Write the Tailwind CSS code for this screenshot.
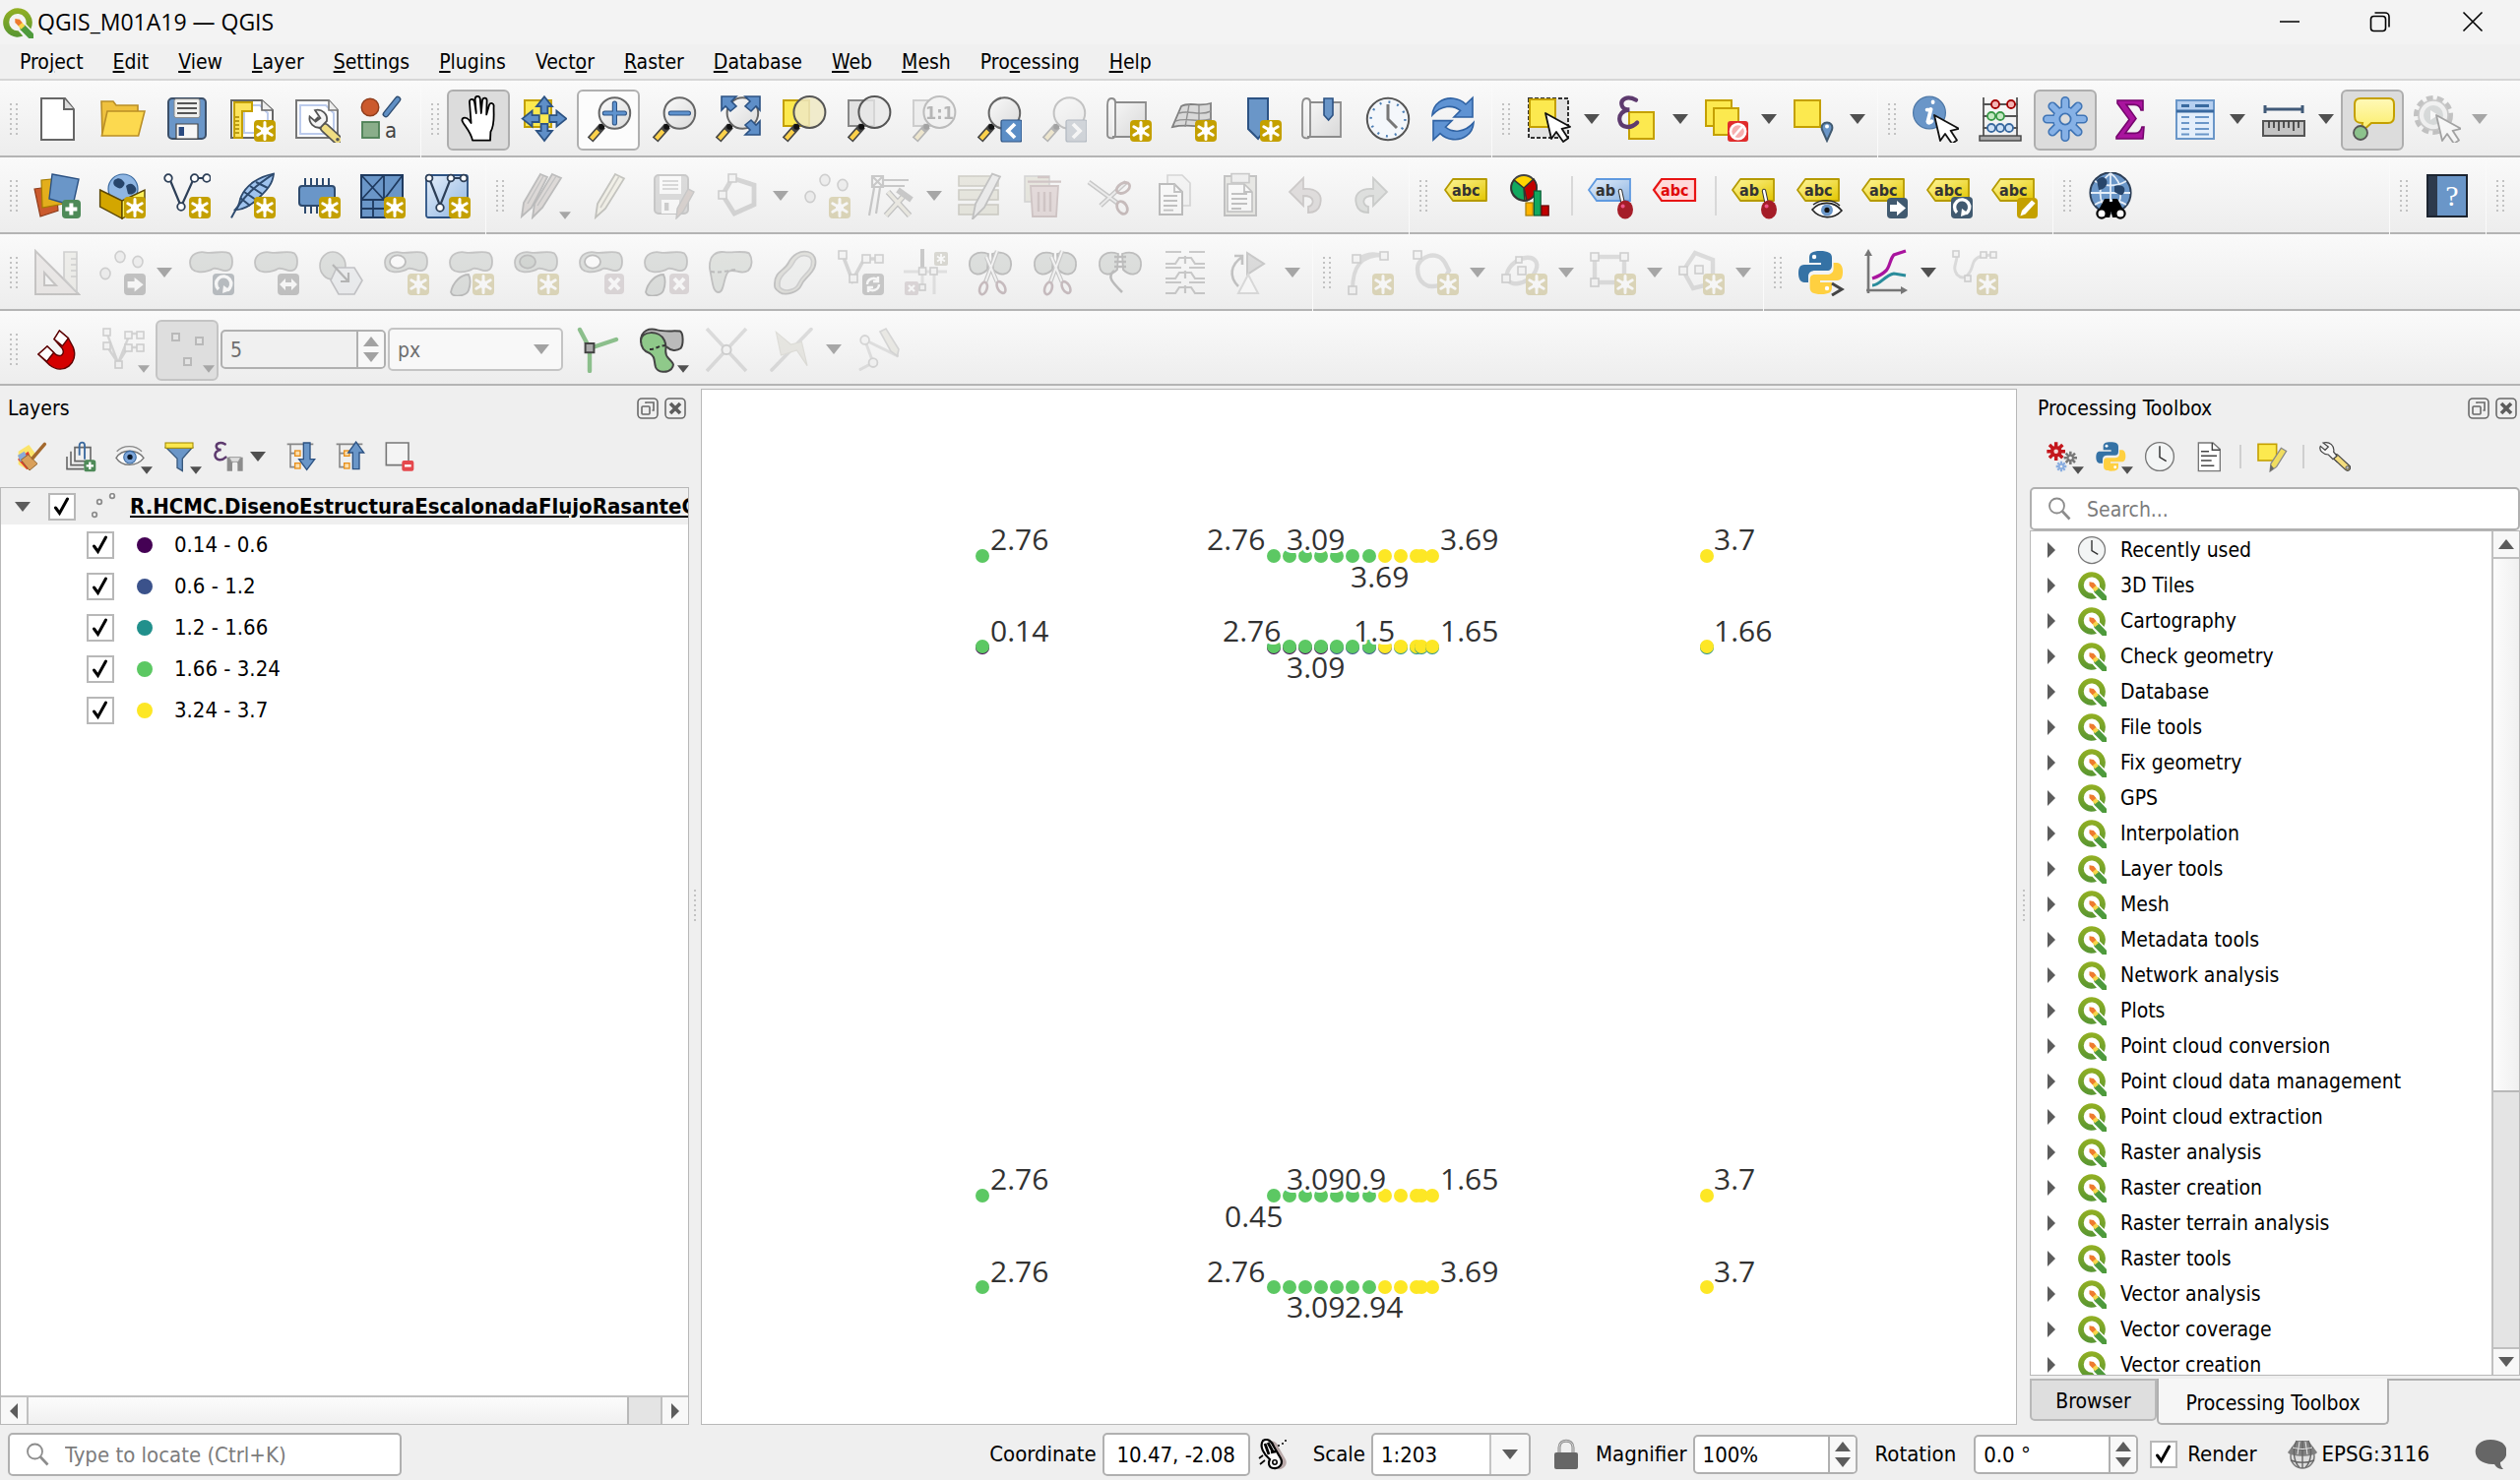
<!DOCTYPE html>
<html lang="en">
<head>
<meta charset="utf-8">
<title>QGIS_M01A19 — QGIS</title>
<script src="https://cdn.jsdelivr.net/npm/@tailwindcss/browser@4"></script>
</head>
<body class="flex h-screen flex-col overflow-hidden bg-[#efefef] font-['DejaVu_Sans_Condensed','DejaVu_Sans',sans-serif] text-[21px] leading-7 text-black">

<svg class="absolute size-0" aria-hidden="true">
  <defs>
    <linearGradient id="ql" x1="0" y1="0" x2="0" y2="1"><stop offset="0" stop-color="#93b023"/><stop offset="1" stop-color="#589632"/></linearGradient>
    <linearGradient id="gl" x1="0" y1="0" x2="1" y2="1"><stop offset="0" stop-color="#fafafa"/><stop offset="1" stop-color="#d8d8d8"/></linearGradient>
    <linearGradient id="bl" x1="0" y1="0" x2="1" y2="1"><stop offset="0" stop-color="#e6effa"/><stop offset="1" stop-color="#8db4e2"/></linearGradient>
    <linearGradient id="yl" x1="0" y1="0" x2="1" y2="1"><stop offset="0" stop-color="#fff79a"/><stop offset="1" stop-color="#e3c600"/></linearGradient>
    <linearGradient id="tipf" x1="0" y1="0" x2="0" y2="1"><stop offset="0" stop-color="#fff9b8"/><stop offset="1" stop-color="#fbec62"/></linearGradient>
    <g id="star"><rect x="13" y="12.500" width="11" height="11" rx="2" fill="#c4a000"/><path d="M18.500 13.800v8.400M14.900 15.900l7.200 4.200M14.900 20.100l7.200-4.200" stroke="#fff" stroke-width="1.500" stroke-linecap="round"/><circle cx="18.500" cy="18" r="2" fill="#fff"/></g>
    <g id="cursor"><path d="M9 9l3 13 2.500-3.500 3.500 5 2.500-1.800-3.200-4.800 4.200-1z" fill="#fff" stroke="#111" stroke-width=".9" stroke-linejoin="round"/></g>
    <g id="magh"><path d="M9 15.500L2.800 22.500" stroke="#444" stroke-width="3.800"/><path d="M6.800 18L3.300 22" stroke="#fcd14a" stroke-width="2.100"/><circle cx="8.600" cy="15.900" r="1.500" fill="#111"/></g>
    <g id="mag"><use href="#magh"/><circle cx="15.200" cy="9" r="7.900" fill="url(#gl)" fill-opacity=".9" stroke="#666" stroke-width="1"/></g>
    <g id="wr"><path d="M10 11l8 8" stroke="#555" stroke-width="4"/><path d="M15 15.500l6.500 6" stroke="#555" stroke-width="5" stroke-linecap="round"/><path d="M15 15.500l6.500 6" stroke="#f0dd82" stroke-width="3.300" stroke-linecap="round"/><path d="M10 6.500a4.800 4.800 0 0 1 6 5.500l-3.200 3.300a4.800 4.800 0 0 1-5.500-5.600l3 2.600 2.400-1.800z" fill="#f4f4f4" stroke="#555" stroke-width=".9"/><circle cx="21.500" cy="21.400" r=".9" fill="#555"/></g>
    <g id="penc"><path d="M15.500 1l4.500 2.200-9.500 15.300-5 4.500 1-7z" fill="#efe7b8" stroke="#6b6b50" stroke-width=".9"/><path d="M17.500 2L8 18" stroke="#8a8560" stroke-width=".8"/></g>
    <g id="blob"><path d="M1.500 7C1.500 2.500 6 1 9.500 1.800S18 .5 21.500 2.200C23.500 4 23.500 9 21.500 10.500c-3 2-4.500-1-8-.6C10 12 1.500 13.500 1.500 7z" fill="#a9b6ab" stroke="#666" stroke-width=".9"/></g>
    <g id="tagy"><path d="M1 9l4-5.500h17v11H5z" fill="url(#yl)" stroke="#b59a00" stroke-width=".9" stroke-linejoin="round"/></g>
    <g id="pin"><path d="M17 9.500l1.500 7" stroke="#333" stroke-width="2.200" stroke-linecap="round"/><path d="M17 9.500l1.500 7" stroke="#fff" stroke-width="1.200" stroke-linecap="round"/><ellipse cx="19.500" cy="19" rx="4" ry="4.700" fill="#a51d28"/><circle cx="18.300" cy="17.300" r="1" fill="#e58"/></g>
    <g id="paper"><path d="M3.500 1.500C1.500 1.500 1.500 4 1.500 5v15c0 2 4 2.500 4 0V3.500h15.500V21H4" fill="url(#gl)" stroke="#8c8c8c" stroke-width=".9"/><path d="M3.500 1.500c2 0 2 1.500 2 2" fill="none" stroke="#8c8c8c"/></g>
    <g id="pt" fill="#ddd" stroke="#888" stroke-width=".8"><ellipse cx="11" cy="4" rx="2.500" ry="2.800"/><ellipse cx="20" cy="6.500" rx="2.500" ry="2.800"/><ellipse cx="3.500" cy="12.500" rx="2.500" ry="2.800"/></g>
    <path id="eps" d="M10 2.500C6 .5 2.500 2 3.500 5c.4 1.300 2 1.800 3.500 1.800C4 7 1.800 9 2.500 11.800c.8 3 5 3.600 8 .7" fill="none" stroke="#5d3a6e" stroke-width="1.900" stroke-linecap="round"/>
    <g id="rot"><rect x="13" y="12.500" width="11" height="11" rx="2" fill="#415a70"/><path d="M16 20.500a3.800 3.800 0 1 1 4.500.5" fill="none" stroke="#fff" stroke-width="1.700"/><path d="M18 22.500l.5-4 3.500 2.500z" fill="#fff"/></g>

    <symbol id="i-q" viewBox="0 0 24 24"><path fill-rule="evenodd" d="M12 1a11 11 0 1 0 4 21.200l-3.600-4A6.500 6.500 0 1 1 18.300 13l3.700 3.800A11 11 0 0 0 12 1z" fill="url(#ql)"/><path d="M13 13.500l4.500.3 6.500 6.700V24h-3.500L14 17.500z" fill="#4e9a3c"/><path d="M11.500 10.500l4 1.500 2 2.500-3 2.500-2.500-3z" fill="#f6d64a"/><path d="M10 9l3.500.5 2 2.500-3 2.500L10 12z" fill="#ee7b2f"/></symbol>
    <symbol id="i-new" viewBox="0 0 24 24"><path d="M4 1.500h12l4.500 5.500v15.500H4z" fill="#fff" stroke="#666"/><path d="M15.500 1.500V7h5" fill="#ddd" stroke="#666"/></symbol>
    <symbol id="i-open" viewBox="0 0 24 24"><path d="M1.500 3h6l1.500 2H20v3.500H6L2 20.500z" fill="#efc13e" stroke="#b98e26" stroke-width=".8"/><path d="M4.500 8H23.500l-3.200 12.500H1.700z" fill="#fcd94f" stroke="#b98e26" stroke-width=".8"/></symbol>
    <symbol id="i-save" viewBox="0 0 24 24"><rect x="2.500" y="1.500" width="19" height="20.500" rx="2" fill="#6a96c8" stroke="#3b4f68"/><rect x="5.500" y="1.800" width="13" height="9.500" rx="1" fill="#f0f0ee" stroke="#888" stroke-width=".5"/><path d="M7 4h10M7 6.500h10M7 9h10" stroke="#555" stroke-width=".9"/><path d="M6.500 22v-7.500h11V22z" fill="#f6f6f6" stroke="#444" stroke-width=".6"/><rect x="7.800" y="16" width="2.700" height="4.500" fill="#2a4a80"/></symbol>
    <symbol id="i-layout" viewBox="0 0 24 24"><path d="M1.500 2.500H17l5.500 5V21.500h-21z" fill="#fff" stroke="#666"/><path d="M8 5h8l4 4v10H8z" fill="none" stroke="#bccbec"/><path d="M17 2.500v5h5.500" fill="#eee" stroke="#666" stroke-width=".8"/><path d="M3 3.500h9v4.500H7v13.500H3z" fill="#fce35c" stroke="#c4a000"/><path d="M3.500 11h2M3.500 13h2M3.500 15h2M3.500 17h2M3.500 19h2" stroke="#a58600" stroke-width=".7"/><use href="#star"/></symbol>
    <symbol id="i-layman" viewBox="0 0 24 24"><path d="M1.500 2.500H18l4.500 5V21.500h-21z" fill="#fff" stroke="#777"/><path d="M3.500 5h13l4 4v10.500h-17z" fill="none" stroke="#bccbec"/><path d="M18 2.500v5h4.500" fill="#eee" stroke="#777" stroke-width=".8"/><use href="#wr" x="1" y="1"/></symbol>
    <symbol id="i-style" viewBox="0 0 24 24"><circle cx="6" cy="6" r="4.400" fill="#cb5a2d" stroke="#8f3d1c" stroke-width=".7"/><path d="M14 9.500l6-7.500" stroke="#2c4a6e" stroke-width="3.300" stroke-linecap="round"/><path d="M14 9.500l6-7.500" stroke="#5f8fc4" stroke-width="2" stroke-linecap="round"/><rect x="2" y="13.500" width="8.500" height="8" fill="#8aae8a" stroke="#4d8055" stroke-width=".9"/><text x="13.500" y="21.500" font-size="11" fill="#444">a</text></symbol>
    <symbol id="i-pan" viewBox="0 0 24 24"><path d="M9 22.800C8 18 4 14.500 3.700 12.700c0-1.800 2.300-1.700 3.600-.2l1 1.500L7.500 3.500C7.300 1.500 9.500 1.300 10 3.300l.9 5.700-.6-7C10.300 0 12.700-.2 12.900 1.800l.5 7.200L14 2.500c.3-1.600 2.400-1.500 2.300.2l-.2 7L17.500 4.800c.7-1.400 2.500-.9 2.300.7-.2 4 .8 9-1.600 13L18 22.800z" fill="#fff" stroke="#000" stroke-width=".9" stroke-linejoin="round"/></symbol>
    <symbol id="i-pansel" viewBox="0 0 24 24"><rect x="2.500" y="2.500" width="13.500" height="13.500" fill="#fce94f" stroke="#c4a000"/><g fill="#5f8fc8" stroke="#2c5283" stroke-width=".9"><path id="arw" d="M12.500.6l4 5h-2.300v3.600h-3.400V5.600H8.500z"/><use href="#arw" transform="rotate(90 12.500 11.800)"/><use href="#arw" transform="rotate(180 12.500 11.800)"/><use href="#arw" transform="rotate(270 12.500 11.800)"/></g></symbol>
    <symbol id="i-zin" viewBox="0 0 24 24"><use href="#mag"/><path d="M15.200 4v10M10.200 9h10" stroke="#2c5283" stroke-width="2.600" stroke-linecap="round"/><path d="M15.200 4v10M10.200 9h10" stroke="#5f93cf" stroke-width="1.600" stroke-linecap="round"/></symbol>
    <symbol id="i-zout" viewBox="0 0 24 24"><use href="#mag"/><path d="M10.700 9h9" stroke="#2c5283" stroke-width="2.600" stroke-linecap="round"/><path d="M10.700 9h9" stroke="#5f93cf" stroke-width="1.600" stroke-linecap="round"/></symbol>
    <symbol id="i-zfull" viewBox="0 0 24 24"><use href="#mag" x="-1" y="0"/><g fill="#5f8fc8" stroke="#2c5283" stroke-width=".8"><path id="ca" d="M3.500.5h7.500L8.500 3 11 5.500 8 8 5.500 5.500 3.500 7.500z"/><use href="#ca" transform="matrix(-1 0 0 1 26.500 0)"/><use href="#ca" transform="matrix(-1 0 0 -1 26.500 20.500)"/></g></symbol>
    <symbol id="i-zsel" viewBox="0 0 24 24"><rect x="2" y="2.500" width="13" height="13" fill="#fce94f" stroke="#c4a000"/><use href="#magh"/><circle cx="15.200" cy="8.500" r="8" fill="#efe9c4" fill-opacity=".85" stroke="#555"/></symbol>
    <symbol id="i-zlay" viewBox="0 0 24 24"><rect x="2" y="2.500" width="13" height="13" fill="#e2e2e2" stroke="#888"/><use href="#magh"/><circle cx="15.200" cy="8.500" r="8" fill="#e9e9e9" fill-opacity=".8" stroke="#555"/></symbol>
    <symbol id="i-z11" viewBox="0 0 24 24"><rect x="2" y="2.500" width="13" height="13" fill="#e2e2e2" stroke="#888"/><use href="#magh"/><circle cx="15.200" cy="8.500" r="8" fill="#eee" stroke="#555"/><text x="15.200" y="12" font-size="9" font-weight="bold" text-anchor="middle" fill="#444">1:1</text></symbol>
    <symbol id="i-zlast" viewBox="0 0 24 24"><use href="#mag"/><rect x="13.500" y="12.500" width="10.500" height="11" rx="1" fill="#5c8ec6" stroke="#2c5283" stroke-width=".6"/><path d="M20.500 14.500L17 18l3.500 3.500" fill="none" stroke="#fff" stroke-width="1.900"/></symbol>
    <symbol id="i-znext" viewBox="0 0 24 24"><use href="#mag"/><rect x="13.500" y="12.500" width="10.500" height="11" rx="1" fill="#8aa0bd" stroke="#2c5283" stroke-width=".6"/><path d="M17 14.500l3.500 3.500-3.500 3.500" fill="none" stroke="#fff" stroke-width="1.900"/></symbol>
    <symbol id="i-mapview" viewBox="0 0 24 24"><use href="#paper"/><use href="#star"/></symbol>
    <symbol id="i-map3d" viewBox="0 0 24 24"><path d="M6 5.500C10 3 15 6 21 4v11c-5 2-10-1-19.500 1z" fill="#d9d9d9" stroke="#808080" stroke-width=".9"/><path d="M10 4.500L8 16M15 5l0 11M5 9c5-2 10 2 16-1M3 13c6-2 11 1 18-1" fill="none" stroke="#909090" stroke-width=".7"/><use href="#star"/></symbol>
    <symbol id="i-bmnew" viewBox="0 0 24 24"><path d="M7 1.500h10v14L12 22l-5-5z" fill="#6a96c8" stroke="#2c5283"/><use href="#star"/></symbol>
    <symbol id="i-bm" viewBox="0 0 24 24"><use href="#paper"/><path d="M12.500 1.500h4.500v8.500l-2.200 2.500-2.300-2.500z" fill="#6a96c8" stroke="#2c5283" stroke-width=".8"/></symbol>
    <symbol id="i-clock" viewBox="0 0 24 24"><circle cx="12" cy="12" r="10.600" fill="#f4f7fb" stroke="#555"/><path d="M12 4.500V12l4.500 4.500" fill="none" stroke="#777" stroke-width="1.500"/><circle cx="12" cy="12" r="8.700" fill="none" stroke="#4d7fb5" stroke-width="1.200" stroke-dasharray="1 3.550"/></symbol>
    <symbol id="i-refresh" viewBox="0 0 24 24"><path id="rf" d="M1.500 10C2 4 7 1 12 1.500c3 .3 5 1.500 6.500 3L22 1.200V11H12.500l3.300-3.300C12 4.500 6 5 1.500 10z" fill="#5f93d3" stroke="#2f62a3" stroke-width=".8"/><use href="#rf" transform="rotate(180 12 11.900)"/></symbol>
    <symbol id="i-select" viewBox="0 0 24 24"><rect x="1.500" y="1.500" width="20" height="20" fill="#e3e3e3" stroke="#333" stroke-dasharray="2 1"/><rect x="2" y="2" width="13" height="14" fill="#fce94f" stroke="#c4a000"/><use href="#cursor" x="1"/></symbol>
    <symbol id="i-selexp" viewBox="0 0 24 24"><rect x="7.500" y="8.500" width="12.500" height="13.500" fill="#fce94f" stroke="#c4a000"/><g transform="scale(1.100 1.150) translate(0 -.5)"><use href="#eps"/></g></symbol>
    <symbol id="i-desel" viewBox="0 0 24 24"><rect x="1.500" y="2.500" width="13" height="13" fill="#fce94f" stroke="#c4a000"/><rect x="5.500" y="6.500" width="12.500" height="13.500" fill="#fce94f" stroke="#c4a000"/><rect x="12.500" y="13" width="10.500" height="10.500" rx="1.500" fill="#e02c2c"/><circle cx="17.800" cy="18.300" r="3.800" fill="#f6b0b0" stroke="#fff" stroke-width="1.300"/><path d="M15.500 21l4.800-5.500" stroke="#fff" stroke-width="1.300"/></symbol>
    <symbol id="i-selloc" viewBox="0 0 24 24"><rect x="1.500" y="2.500" width="13" height="13.500" fill="#fce94f" stroke="#c4a000"/><path d="M18 23l-2.500-5.500c-1.500-5 6.500-5 5 0z" fill="#6a96c8" stroke="#415a70"/><circle cx="18" cy="15.800" r="1" fill="#fff"/></symbol>
    <symbol id="i-ident" viewBox="0 0 24 24"><circle cx="9" cy="8.800" r="8.200" fill="#6a96c8" stroke="#4c76a5" stroke-width=".6"/><path d="M10.800 3.200v.3M9.800 7l-1.600 6.300c.2 1 1.400.6 2-.2M7.800 7.300h2" stroke="#fff" stroke-width="1.900" stroke-linecap="round" fill="none"/><use href="#cursor" x="2.500" y="1"/></symbol>
    <symbol id="i-abacus" viewBox="0 0 24 24"><path d="M3.500 1v20M20.500 1v20M3 4.500h18M3 10.500h18M3 16.500h18" stroke="#555" stroke-width=".9"/><rect x="1.500" y="20.500" width="21" height="2.500" fill="#aaa" stroke="#444" stroke-width=".7"/><g stroke-width=".9"><g fill="#f3b5b5" stroke="#a40000"><circle cx="9.500" cy="4.500" r="2"/><circle cx="17.500" cy="4.500" r="2"/></g><g fill="#c6eac4" stroke="#3a9a48"><circle cx="7.500" cy="10.500" r="2"/><circle cx="12" cy="10.500" r="2"/></g><g fill="#cfe2f7" stroke="#39699f"><circle cx="7.500" cy="16.500" r="2"/><circle cx="12" cy="16.500" r="2"/><circle cx="16.500" cy="16.500" r="2"/></g></g></symbol>
    <symbol id="i-gear" viewBox="0 0 24 24"><g stroke="#3f74b5" stroke-width="4.600" stroke-linecap="round"><path d="M12 2.800v18.400M2.800 12h18.400M5.500 5.500l13 13M18.500 5.500l-13 13"/></g><circle cx="12" cy="12" r="6.600" fill="#3f74b5"/><g stroke="#86b1e6" stroke-width="3" stroke-linecap="round"><path d="M12 2.800v18.400M2.800 12h18.400M5.500 5.500l13 13M18.500 5.500l-13 13"/></g><circle cx="12" cy="12" r="5.900" fill="#86b1e6"/><circle cx="12" cy="12" r="2.800" fill="#dcdcdc" stroke="#3f74b5" stroke-width=".9"/></symbol>
    <symbol id="i-sigma" viewBox="0 0 24 24"><path d="M5.500 2.500h13v5h-1c-.5-2-1.500-2.800-3.500-2.800H10l5 7-5.500 7.500h5c2 0 3-1 3.500-3.200h1l-.5 6H5v-1l6.500-8.800L5.500 4z" fill="#a9149e" stroke="#75056d" stroke-width=".8"/></symbol>
    <symbol id="i-table" viewBox="0 0 24 24"><rect x="2.500" y="2.500" width="19" height="19.500" fill="#e3eefb" stroke="#6a96c8"/><rect x="3" y="3" width="18" height="4.500" fill="#b5cff0"/><path d="M2.500 8h19M5 5.300h4M12 5.300h7" stroke="#39699f" stroke-width="1.500"/><path d="M5 11h4M12 11h7M5 14h4M12 14h7M5 17h4M12 17h7M5 19.800h4M12 19.800h7" stroke="#6a96c8" stroke-width="1"/></symbol>
    <symbol id="i-measure" viewBox="0 0 24 24"><path d="M2.500 5v4M21.500 5v4M2.500 7h19" stroke="#415a78" stroke-width="1.500"/><rect x="1.500" y="13" width="21" height="7.500" fill="#c4c4c4" stroke="#555"/><path d="M4.500 13v3.500M7 13v3.500M9.500 13v5M12 13v3.500M14.500 13v3.500M17 13v5M19.500 13v3.500" stroke="#444" stroke-width=".9"/></symbol>
    <symbol id="i-tip" viewBox="0 0 24 24"><path d="M6 1.500h14.500c2 0 2.500 1.500 2.500 3v6c0 2-1 3.500-3 3.500h-8.500L6 19l1-5c-3 0-4-1-4-3.500V4.500c0-2 1-3 3-3z" fill="url(#tipf)" stroke="#c4a000"/><circle cx="6" cy="19" r="3.500" fill="#8cc28c" stroke="#555" stroke-width=".9"/></symbol>
    <symbol id="i-action" viewBox="0 0 24 24"><circle cx="10" cy="10" r="8.500" fill="#e4e4e4" stroke="#666" stroke-width="3" stroke-dasharray="3.200 2"/><circle cx="10" cy="10" r="7.500" fill="#e8e8e8" stroke="#777" stroke-width=".8"/><circle cx="10" cy="10" r="5" fill="#9aa"/><path d="M8.500 7.500l4 2.500-4 2.500z" fill="#fff"/><use href="#cursor" x="2.500" y="1"/></symbol>

    <symbol id="i-dsm" viewBox="0 0 24 24"><path d="M.5 8.500l11-1.500 1 12.500-9 3z" fill="#cb5a2d" stroke="#8f3d1c" stroke-width=".6"/><path d="M4 4l11-1 .5 13-11 2z" fill="#e3ae1c" stroke="#a57c00" stroke-width=".6"/><path d="M9.500 1l13.500 2.500-3 13.500-12-3.500z" fill="#6a96c8" stroke="#2c5283" stroke-width=".7"/><rect x="14.500" y="14" width="9.500" height="9.500" rx="2" fill="#4e8a58"/><path d="M19.200 15.800v6M16.200 18.800h6" stroke="#fff" stroke-width="2"/></symbol>
    <symbol id="i-gpkg" viewBox="0 0 24 24"><circle cx="12.500" cy="8.500" r="7.500" fill="#8fb6e3" stroke="#39699f" stroke-width=".6"/><path d="M8 4c3-2 4 0 5 1s-1 4-3 3-3-2-2-4zM14 7c2-2 4-1 5 1s-2 4-4 3z" fill="#27456b"/><path d="M.8 9L12 14.500V23.500L.8 17.500z" fill="#d3a600" stroke="#5a4600" stroke-width=".7"/><path d="M12 14.500L23.500 9v8.500L12 23.500z" fill="#fcf05a" stroke="#5a4600" stroke-width=".7"/><use href="#star"/></symbol>
    <symbol id="i-shp" viewBox="0 0 24 24"><path d="M3 3l6 14.500L15.500 3H22" fill="none" stroke="#2d3f57" stroke-width="1.100"/><g fill="#fff" stroke="#2d3f57" stroke-width=".9"><circle cx="2.500" cy="3" r="1.900"/><circle cx="9" cy="17.500" r="1.900"/><circle cx="15.800" cy="3" r="1.900"/><circle cx="22" cy="3" r="1.900"/></g><use href="#star"/></symbol>
    <symbol id="i-feather" viewBox="0 0 24 24"><path d="M23 .8c-8 1.500-14 6-16.500 11.500C5 16 6 17 3.500 19c3 .5 8-2 12-6 4-3.800 7-7 7.500-12.200z" fill="#9fc3ee" stroke="#2d4a6e" stroke-width=".9"/><path d="M23 .8C15 6 7 12 1.500 23.200M8 10l6 4M11 7l6 4M14 5l6 3M6 13l5 4" fill="none" stroke="#2d4a6e" stroke-width="1"/><use href="#star"/></symbol>
    <symbol id="i-chip" viewBox="0 0 24 24"><path d="M6 3v18M9 3v18M12 3v18M15 3v18M18 3v18" stroke="#2d4a6e"/><rect x="3" y="7" width="18" height="10" rx="1.500" fill="#6a96c8" stroke="#2d4a6e"/><use href="#star"/></symbol>
    <symbol id="i-mesh" viewBox="0 0 24 24"><path d="M1.500 1.500h21v12.500H13.500v9h-12z" fill="#6a96c8" stroke="#1f3a5f"/><path d="M13 1.500V14M1.500 14H22.500M1.500 1.500L13 14M13 1.500L1.500 14M13 14L22.500 1.500M7.500 14v9M1.500 18.500H13" stroke="#1f3a5f" stroke-width=".9"/><use href="#star"/></symbol>
    <symbol id="i-virt" viewBox="0 0 24 24"><rect x="1.500" y="1.500" width="21" height="21.500" rx="1" fill="url(#bl)" stroke="#2c5283" stroke-width=".9"/><path d="M3 3l5.500 14L14 3h7" fill="none" stroke="#2d3f57" stroke-width="1.100"/><g fill="#fff" stroke="#2d3f57" stroke-width=".9"><circle cx="3" cy="3" r="1.700"/><circle cx="8.500" cy="18" r="1.900"/><circle cx="14" cy="3" r="1.700"/><circle cx="20.500" cy="3" r="1.700"/></g><use href="#star"/></symbol>
    <symbol id="i-pens" viewBox="0 0 24 24"><g fill="#b9a59b" stroke="#555" stroke-width=".9"><path d="M10.500 1L14 2.500 6 18l-5 4.500 1-7z"/><path d="M16.500 1L21 3 11.500 18l-5 5 1-7z"/></g><path d="M18.500 2L9 17M12 2L4 16" stroke="#666" stroke-width=".7"/></symbol>
    <symbol id="i-pen" viewBox="0 0 24 24"><use href="#penc"/></symbol>
    <symbol id="i-saveed" viewBox="0 0 24 24"><rect x="2.500" y="1.500" width="17" height="19.500" rx="2" fill="#aaa" stroke="#777"/><rect x="5" y="2" width="11" height="9" fill="#fff"/><path d="M6.500 4.500h8M6.500 6.500h8M6.500 8.500h8" stroke="#888" stroke-width=".8"/><rect x="6" y="14" width="9" height="7" fill="#fff"/><rect x="7.500" y="15.500" width="2.200" height="4" fill="#888"/><path d="M19.500 8.500l3 1.500-5.500 10-3.500 3.500.5-5z" fill="#b58f7c" stroke="#777" stroke-width=".7"/></symbol>
    <symbol id="i-poly" viewBox="0 0 24 24"><path d="M9 3l11 3.500v10L10 21 4 11.500z" fill="none" stroke="#999" stroke-width="2.400"/><g fill="#eee" stroke="#888" stroke-width=".8"><rect x="7" y="1" width="4" height="4"/><rect x="2" y="9.500" width="4" height="4"/></g></symbol>
    <symbol id="i-points" viewBox="0 0 24 24"><use href="#pt"/><use href="#star"/></symbol>
    <symbol id="i-vertex" viewBox="0 0 24 24"><path d="M2 2h5.500v5.500H2zM2 2l5.500 5.500M7.500 2L2 7.500M7.500 4h13M7.500 7h11M3 8L.5 22M6 8l-2 13" fill="none" stroke="#777" stroke-width="1.100"/><path d="M10 10l11 12M19 11L9 22" stroke="#666" stroke-width="3"/><path d="M10 10l11 12M19 11L9 22" stroke="#ddd6b0" stroke-width="1.700"/><path d="M15 9l7 5" stroke="#777" stroke-width="3"/></symbol>
    <symbol id="i-attr" viewBox="0 0 24 24"><g fill="#cfcba2" stroke="#8c8860" stroke-width=".8"><rect x="1" y="2" width="20" height="5"/><rect x="1" y="9" width="20" height="5"/><rect x="1" y="16.500" width="20" height="5"/></g><path d="M18 .8l4 1.500-8 15.500-6 6L9.500 16z" fill="#d8d8d8" stroke="#666" stroke-width=".9"/></symbol>
    <symbol id="i-trash" viewBox="0 0 24 24"><rect x="1.500" y="2" width="12.500" height="13" fill="#cfcba2" stroke="#999" stroke-width=".8"/><path d="M4.500 7h14l-1 15.500h-12z" fill="#d9a5a5" stroke="#a56a6a" stroke-width=".9"/><path d="M3 4.800h17M8 2.500h6M8.500 10v10M11.500 10v10M14.500 10v10" stroke="#a56a6a" stroke-width="1.200"/></symbol>
    <symbol id="i-cut" viewBox="0 0 24 24"><path d="M1 5l15 11M7 17l13-12" stroke="#777" stroke-width="2.400"/><path d="M1 5l15 11M7 17l13-12" stroke="#ddd" stroke-width="1"/><ellipse cx="18.500" cy="8" rx="3.600" ry="2.400" transform="rotate(-30 18.500 8)" fill="none" stroke="#8d5050" stroke-width="1.400"/><ellipse cx="18" cy="18" rx="2.400" ry="3.400" transform="rotate(-30 18 18)" fill="none" stroke="#8d5050" stroke-width="1.400"/></symbol>
    <symbol id="i-copy" viewBox="0 0 24 24"><path d="M8 1.500h7.500l4 4V17H8z" fill="#eee" stroke="#999" stroke-width=".8"/><path d="M4 6h7.500l4 4V21.500H4z" fill="#fff" stroke="#555"/><path d="M11.500 6v4h4M6 12h7M6 14.500h7M6 17h7M6 19.300h5" fill="none" stroke="#666" stroke-width=".9"/></symbol>
    <symbol id="i-paste" viewBox="0 0 24 24"><rect x="4" y="2" width="16" height="20" fill="#cfcfbd" stroke="#666"/><path d="M5.500 6H14l4 4v10H5.500z" fill="#fff" stroke="#666" stroke-width=".8"/><rect x="7.500" y=".8" width="9" height="4.500" fill="#e2e2e2" stroke="#777" stroke-width=".8"/><path d="M14 6v4h4M7.500 11h8M7.500 13.500h8M7.500 16h8M7.500 18.500h5" fill="none" stroke="#666" stroke-width=".9"/></symbol>
    <symbol id="i-undo" viewBox="0 0 24 24"><path d="M11 3v5.500c7-.5 10 3 8.500 8-.8 3-3 4-6 4v-3c3-.5 4-5.500-2.500-5.500V17L4 10z" fill="#bfb0ae" stroke="#8b7b78" stroke-width=".9"/></symbol>
    <symbol id="i-redo" viewBox="0 0 24 24"><path d="M13.500 3v5.500c-7-.5-10 3-8.500 8 .8 3 3 4 6 4v-3c-3-.5-4-5.500 2.500-5.500V17l7-7z" fill="#b4bcb4" stroke="#7d857d" stroke-width=".9"/></symbol>
    <symbol id="i-abc" viewBox="0 0 24 24"><use href="#tagy"/><text x="4.500" y="12" font-size="8" font-weight="bold" fill="#333">abc</text></symbol>
    <symbol id="i-pie" viewBox="0 0 24 24"><circle cx="8" cy="8" r="6.500" fill="#ffd400" stroke="#444" stroke-width=".9"/><path d="M8 8l5-4.500c3 4 1.500 9-3.500 11z" fill="#c00000" stroke="#333" stroke-width=".8"/><path d="M8 8L3 4c-3 4-1 9.500 5.500 10.500z" fill="#12a85f" stroke="#333" stroke-width=".8"/><rect x="9" y="15.500" width="3.600" height="6.500" fill="#ffb400" stroke="#a57c00" stroke-width=".6"/><rect x="13.200" y="9.500" width="3.400" height="12.500" fill="#12a85f" stroke="#0b5c34" stroke-width=".6"/><rect x="17" y="17" width="3.600" height="5" fill="#c00000" stroke="#600" stroke-width=".6"/></symbol>
    <symbol id="i-abpinb" viewBox="0 0 24 24"><path d="M1 9l4-5.500h17v11H5z" fill="url(#bl)" stroke="#5f9ae0" stroke-width=".9"/><text x="4.500" y="12" font-size="8" font-weight="bold" fill="#333">ab</text><use href="#pin"/></symbol>
    <symbol id="i-abcred" viewBox="0 0 24 24"><path d="M1 9l4-5.500h17v11H5z" fill="#ffd9d9" stroke="#e81414" stroke-width="1.100"/><text x="4.500" y="12" font-size="8" font-weight="bold" fill="#e00b0b">abc</text></symbol>
    <symbol id="i-abpin" viewBox="0 0 24 24"><use href="#tagy"/><text x="4.500" y="12" font-size="8" font-weight="bold" fill="#333">ab</text><use href="#pin"/></symbol>
    <symbol id="i-abceye" viewBox="0 0 24 24"><use href="#tagy"/><text x="4.500" y="12" font-size="8" font-weight="bold" fill="#333">abc</text><path d="M8.500 19c4-4.500 11-4.500 15 .5-4 4.500-11 4.500-15-.5z" fill="#fff" stroke="#222" stroke-width=".8"/><path d="M9 16.500c4-3 10-3 13.500.5" fill="none" stroke="#222" stroke-width=".7"/><circle cx="16" cy="19.200" r="3" fill="#6a96c8"/><circle cx="16" cy="19.200" r="1.300" fill="#111"/></symbol>
    <symbol id="i-abcmove" viewBox="0 0 24 24"><use href="#tagy"/><text x="4.500" y="12" font-size="8" font-weight="bold" fill="#333">abc</text><rect x="13.500" y="13" width="10.500" height="10.500" rx="2" fill="#415a70"/><path d="M15 16.500h3.500V14.500l4.500 3.800-4.500 3.800V20H15z" fill="#fff"/></symbol>
    <symbol id="i-abcrot" viewBox="0 0 24 24"><use href="#tagy"/><text x="4.500" y="12" font-size="8" font-weight="bold" fill="#333">abc</text><use href="#rot"/></symbol>
    <symbol id="i-abced" viewBox="0 0 24 24"><use href="#tagy"/><text x="4.500" y="12" font-size="8" font-weight="bold" fill="#333">abc</text><rect x="13.500" y="13" width="10.500" height="10.500" rx="2" fill="#c4a000"/><path d="M21 14.200l1.800 1.600-5 5.500-2.600 1 .8-2.800z" fill="#fff"/></symbol>
    <symbol id="i-globe" viewBox="0 0 24 24"><circle cx="12" cy="10.500" r="10.300" fill="#6a96c8" stroke="#2d3f57"/><path d="M12 .5v20M2 10.500h20M4 4.500c5 3 11 3 16 0M4 16.500c5-3 11-3 16 0M12 .5c-7 5-7 15 0 20M12 .5c7 5 7 15 0 20" fill="none" stroke="#e4edf8" stroke-width=".9"/><path d="M5 4c2-2 4-2 5 0s-1 5-4 5zM14 7c3-1 6 0 5 3s-3 1-5 0z" fill="#27456b"/><path d="M9 13.500h2.500v1.500h1.500v-1.500h2.500L19 20l-3 3h-3l-.7-3-.7 3h-3L5.500 20z" fill="#000"/><circle cx="7.500" cy="21" r="2.300" fill="#fff" stroke="#000" stroke-width="1.100"/><circle cx="17" cy="21" r="2.300" fill="#fff" stroke="#000" stroke-width="1.100"/></symbol>
    <symbol id="i-help" viewBox="0 0 24 24"><rect x="2" y="1.500" width="20" height="21" fill="#6a96c8" stroke="#1c2430"/><rect x="2.500" y="2" width="4.500" height="20" fill="#2d3a4d"/><text x="14.500" y="17" font-size="15" text-anchor="middle" fill="#fff" class="font-['Liberation_Serif',serif]">?</text></symbol>

    <symbol id="i-tri" viewBox="0 0 24 24"><path d="M1 1v22h22z" fill="#dccfc9" stroke="#776f6c"/><path d="M5.500 12v6.500h6z" fill="#f4f4f4" stroke="#776f6c"/><path d="M15.500 1.500h6.500V22L15.500 15z" fill="#e0decb" stroke="#888" stroke-width=".8"/><path d="M19 5h3M19 8h3M19 11h3M19 14h3" stroke="#888" stroke-width=".8"/></symbol>
    <symbol id="i-move" viewBox="0 0 24 24"><use href="#pt"/><rect x="13" y="12.500" width="11" height="11" rx="2" fill="#666"/><path d="M14.800 16.500h3.500v-2l4.500 3.600-4.500 3.700v-2h-3.500z" fill="#fff"/></symbol>
    <symbol id="i-rotate" viewBox="0 0 24 24"><use href="#blob"/><use href="#rot"/></symbol>
    <symbol id="i-scale" viewBox="0 0 24 24"><use href="#blob"/><rect x="13" y="12.500" width="11" height="11" rx="2" fill="#666"/><path d="M14 18l3-3v2h3v-2l3 3-3 3v-2h-3v2z" fill="#fff"/></symbol>
    <symbol id="i-simpl" viewBox="0 0 24 24"><ellipse cx="8" cy="8.500" rx="6.500" ry="7" fill="#a9b6ab" stroke="#666" stroke-width=".8"/><path d="M10 9.500h9L23 16l-4 7h-8l-4-7z" fill="#d5dde6" stroke="#667" stroke-width=".8"/><path d="M8 8l7.500 8M16 12v4.500h-4" fill="none" stroke="#444" stroke-width="1.100"/></symbol>
    <symbol id="i-ring" viewBox="0 0 24 24"><use href="#blob"/><ellipse cx="8" cy="6.500" rx="4" ry="3.300" fill="#fff" stroke="#555" stroke-width=".9"/><use href="#star"/></symbol>
    <symbol id="i-part" viewBox="0 0 24 24"><use href="#blob"/><path d="M11 13c-4 0-8 4-9 9 1 3 8 2 9-1 1-3 1-6 0-8z" fill="#a9b6ab" stroke="#555" stroke-width=".9"/><use href="#star"/></symbol>
    <symbol id="i-fill" viewBox="0 0 24 24"><use href="#blob"/><ellipse cx="8" cy="6.500" rx="4" ry="3.300" fill="#8d9d8d" stroke="#555" stroke-width=".9"/><use href="#star"/></symbol>
    <g id="del"><rect x="14" y="12.500" width="10" height="10.500" rx="2" fill="#b89aa4"/><path d="M16.500 15l5 5.500M21.500 15l-5 5.500" stroke="#fff" stroke-width="2"/></g>
    <symbol id="i-dring" viewBox="0 0 24 24"><use href="#blob"/><ellipse cx="8" cy="6.500" rx="4" ry="3.300" fill="#fff" stroke="#555" stroke-width=".9"/><use href="#del"/></symbol>
    <symbol id="i-dpart" viewBox="0 0 24 24"><use href="#blob"/><path d="M11 13c-4 0-8 4-9 9 1 3 8 2 9-1 1-3 1-6 0-8z" fill="#a9b6ab" stroke="#555" stroke-width=".9"/><use href="#del"/></symbol>
    <symbol id="i-resh" viewBox="0 0 24 24"><path d="M1.500 10C1 3 5 1 9 1.600s9-1 12.500.6c2 3 1.500 7-.5 8.800-4 2.500-7-1.500-10 .5-2.500 2-2 10.500-5 10.500s-3-5-4.500-12z" fill="#b4c0b0" stroke="#666" stroke-width=".9"/><path d="M2 11.500c5 1 10-1 13-1" stroke="#555" stroke-dasharray="2 1.500" fill="none"/></symbol>
    <symbol id="i-offs" viewBox="0 0 24 24"><path d="M1.500 17.500c0-6 5-6.500 7-10.500s6-6.500 10-5.500 5 6 2 10-4 3.500-5.500 7-8 5.500-11 3.500-2.500-3-2.500-4.500z" fill="#b9b9a3" stroke="#666" stroke-width=".9"/><path d="M4 17c.5-4.500 5-5.500 7-9.500s5-4.500 7.300-3.800 2.700 4 .7 6.800-4 3.500-5.500 7-6 4-8 3S4 18.500 4 17z" fill="#dfe3df" stroke="#888" stroke-width=".8"/></symbol>
    <symbol id="i-rev" viewBox="0 0 24 24"><path d="M3 3l5 13L14 5h8" fill="none" stroke="#999" stroke-width="1.800"/><g fill="#eee" stroke="#888" stroke-width=".8"><rect x="1" y="1" width="4" height="4"/><rect x="6.500" y="13" width="4" height="4"/><rect x="13" y="3" width="4" height="4"/><rect x="19.500" y="3" width="4" height="4"/></g><rect x="13" y="12.500" width="11" height="11" rx="2" fill="#777"/><path d="M15.500 18c0-3 4-4 5.500-2M21.500 18c0 3-4 4-5.500 2M21 14v2.500h-2.500M16 22v-2.500h2.500" fill="none" stroke="#fff" stroke-width="1.200"/></symbol>
    <symbol id="i-trim" viewBox="0 0 24 24"><path d="M10.500 0v11" stroke="#777" stroke-width="2"/><path d="M1 11.500h22M10.500 12v8M16.500 12v11" stroke="#bbb" stroke-width="1.500"/><g fill="#eee" stroke="#888" stroke-width=".8"><rect x="8.800" y="9.500" width="3.500" height="3.500"/><rect x="14.500" y="9.500" width="3.500" height="3.500"/><rect x="9" y="18" width="3" height="3"/></g><rect x="16.500" y="1.500" width="7" height="7" rx="1" fill="#a5a07d"/><path d="M20 2.500v5M18 3.700l4 2.500M18 6.200l4-2.500" stroke="#fff" stroke-width=".9"/><rect x="1.500" y="16.500" width="7" height="7" rx="1" fill="#b89aa4"/><path d="M3.500 18.500l3 3M6.500 18.500l-3 3" stroke="#fff" stroke-width="1.200"/></symbol>
    <g id="kid"><path d="M11 2.500C5 .5 1 3.500 1.500 8.500s5.500 5.500 9 2zM13 2.500c6-2 10 1 9.500 6s-5.500 5.500-9 2z" fill="#a9b6ab" stroke="#555" stroke-width=".9"/></g>
    <symbol id="i-split" viewBox="0 0 24 24"><use href="#kid"/><path d="M15.500 1L9.500 17M10 4l5.500 13" stroke="#777" stroke-width="2.200"/><path d="M15.500 1L9.500 17M10 4l5.500 13" stroke="#eee" stroke-width="1"/><ellipse cx="8.500" cy="20" rx="1.800" ry="3.200" transform="rotate(18 8.500 20)" fill="none" stroke="#905060" stroke-width="1.300"/><ellipse cx="17.500" cy="19.500" rx="1.800" ry="3.200" transform="rotate(-30 17.500 19.500)" fill="none" stroke="#905060" stroke-width="1.300"/></symbol>
    <symbol id="i-merge" viewBox="0 0 24 24"><use href="#kid"/><path d="M9 4h6M9 6.500h6M9 9h6M9 11c-4 3-1 6 4 11" fill="none" stroke="#555" stroke-width="1.300"/></symbol>
    <symbol id="i-lines" viewBox="0 0 24 24"><path d="M2 1.500h8M14 1.500h8M2 7.500h5l2-3h6l2 3h5M2 9.500h8M14 9.500h8M2 15h5l2-3h6l2 3h5M2 17h8M14 17h8M2 22.500h5l2-3h6l2 3h5M12 3.500v4M12 11v4M12 18.500v4" fill="none" stroke="#777" stroke-width="1.100"/></symbol>
    <symbol id="i-rotsym" viewBox="0 0 24 24"><path d="M10.500 2v11l8.500-5.500z" fill="#aaa" stroke="#777"/><path d="M6 22.500L11 13l5 9.500z" fill="#fff" stroke="#aaa"/><path d="M6 19C1 14 2 8 8 4M8 8V3.500H4" fill="none" stroke="#666" stroke-width="1.300"/></symbol>
    <symbol id="i-curve" viewBox="0 0 24 24"><path d="M3 21C3 9 7 3 19 3M6 5c5-3 9-3 14-1" fill="none" stroke="#aaa" stroke-width="2"/><g fill="#eee" stroke="#888" stroke-width=".8"><rect x="1" y="19" width="4" height="4"/><rect x="3" y="3" width="4" height="4"/><rect x="17" y="1.500" width="4" height="4"/></g><use href="#star"/></symbol>
    <symbol id="i-circ" viewBox="0 0 24 24"><path d="M3 10c0-6 10-10 14-3l2 4-4 7c-7 3-12-1-12-8z" fill="none" stroke="#aaa" stroke-width="2.200"/><rect x="1" y="1" width="4" height="4" fill="#eee" stroke="#888" stroke-width=".8"/><use href="#star"/></symbol>
    <symbol id="i-ell" viewBox="0 0 24 24"><ellipse cx="11" cy="11" rx="8.500" ry="5.500" transform="rotate(-35 11 11)" fill="none" stroke="#aaa" stroke-width="2.200"/><g fill="#eee" stroke="#888" stroke-width=".8"><rect x="9" y="9" width="4" height="4"/><rect x="8" y="4" width="3" height="3"/><rect x="1" y="13" width="4" height="4"/></g><use href="#star"/></symbol>
    <symbol id="i-rect" viewBox="0 0 24 24"><rect x="3" y="4" width="15" height="13" fill="none" stroke="#aaa" stroke-width="2.200"/><g fill="#eee" stroke="#888" stroke-width=".8"><rect x="1" y="2" width="4" height="4"/><rect x="16" y="2" width="4" height="4"/><rect x="1" y="15" width="4" height="4"/></g><use href="#star"/></symbol>
    <symbol id="i-hex" viewBox="0 0 24 24"><path d="M9 2l9 3.500v12L8 20 3 11z" fill="none" stroke="#aaa" stroke-width="2.200"/><g fill="#eee" stroke="#888" stroke-width=".8"><rect x="9" y="8.500" width="4" height="4"/><rect x="1" y="9" width="4" height="4"/></g><use href="#star"/></symbol>
    <g id="py"><path d="M12 1c-4 0-5.500 1-5.500 3.500V7H12.500v1H4C1.500 8 1 10 1 12.500S2 17 4 17h2v-3c0-2 1.500-3 3.500-3h6c1.700 0 2.500-1 2.500-3V4.500C18 2 16 1 12 1z" fill="#3572a5"/><circle cx="9" cy="4" r="1.100" fill="#fff"/><path d="M12.500 23c4 0 5.500-1 5.500-3.500V17h-6v-1h8.500c2.500 0 3-2 3-4.500S22.500 7 20.500 7h-1.700v3c0 2-1.500 3-3.500 3h-6C7.500 13 6.800 14 6.800 16v3.500C6.800 22 8.500 23 12.500 23z" fill="#ffd040"/><circle cx="15.500" cy="20" r="1.100" fill="#fff"/></g>
    <symbol id="i-pyc" viewBox="0 0 24 24"><use href="#py" x="-.5"/><path d="M17.500 17.500l5 3-5 3" fill="none" stroke="#444" stroke-width="1.500"/></symbol>
    <symbol id="i-py" viewBox="0 0 24 24"><use href="#py"/></symbol>
    <symbol id="i-plot" viewBox="0 0 24 24"><path d="M3 22.500V3M2 21h19" stroke="#777" stroke-width="1.300"/><path d="M3 0l2 3.500H1zM23 21l-3.500-2v4z" fill="#777"/><path d="M5 15c3-1 5-2 7-4s2-6 4-8l6-2" fill="none" stroke="#a9149e" stroke-width="1.600"/><path d="M5 18.500c4 0 6-5 11-6l6 1" fill="none" stroke="#2a8c9b" stroke-width="1.500"/></symbol>
    <symbol id="i-traced" viewBox="0 0 24 24"><path d="M3 1C4 6 0 9 3 13c4 4 7-1 8-5s4-5 12-5" fill="none" stroke="#aaa" stroke-width="1.500"/><g fill="#eee" stroke="#888" stroke-width=".8"><rect x="1" y="1" width="3" height="3"/><rect x="7" y="13.500" width="3" height="3"/><rect x="15" y="1.500" width="3" height="3"/><rect x="20" y="1.500" width="3" height="3"/></g><use href="#star"/></symbol>

    <symbol id="i-magnet" viewBox="0 0 24 24"><g transform="translate(1 0)"><path d="M12.200 2.500l4.500 3.800 2.500 4.700c3 8-5 14.500-12 9L1.500 14.500 6 10.500l4.500 4.200c2.500 1.500 4.500-.5 3.200-3L9.500 6.800z" fill="#d40000" stroke="#5c0000" stroke-width=".7"/><path d="M12.200 2.500l4.500 3.800-3 4L9.500 6.800zM6 10.500l3.300 3.100-3.500 4.500L1.500 14.500z" fill="#fff" stroke="#5c0000" stroke-width=".7"/></g></symbol>
    <symbol id="i-snapv" viewBox="0 0 24 24"><path d="M4 3l6 16 6-15h6M4 10l6 9 5-8h7" fill="none" stroke="#999" stroke-width="1.200"/><g fill="#eee" stroke="#888" stroke-width=".8"><rect x="2.500" y="1.500" width="3.500" height="3.500"/><rect x="2.500" y="8.500" width="3.500" height="3.500"/><rect x="8.500" y="18" width="3.500" height="3.500"/><rect x="13.500" y="3" width="3.500" height="3.500"/><rect x="19.500" y="3" width="3.500" height="3.500"/><rect x="13.500" y="9.500" width="3.500" height="3.500"/><rect x="19.500" y="9.500" width="3.500" height="3.500"/></g></symbol>
    <symbol id="i-snapp" viewBox="0 0 24 24"><g fill="#eee" stroke="#777"><rect x="4.500" y="4" width="3.500" height="3.500"/><rect x="16.500" y="6" width="3.500" height="3.500"/><rect x="10.500" y="16.500" width="3.500" height="3.500"/></g></symbol>
    <symbol id="i-topo" viewBox="0 0 24 24"><path d="M3.500 2l5 9.500V23M8.500 11.500L22 7" fill="none" stroke="#8cbf8c" stroke-width="2.200" stroke-linecap="round"/><rect x="6.300" y="9" width="4.400" height="4.600" fill="#aaa" stroke="#444"/></symbol>
    <symbol id="i-over" viewBox="0 0 24 24"><path d="M1.500 8C1.500 2 6 1 10 2.200c4 1 8 .2 11.500.6 1.700 1 1.700 7 .2 8.700-2 1.500-5.200 1.200-6.700-.5C13 9 4 14 1.500 8z" fill="#bbb" stroke="#444"/><path d="M1.500 7.500c0-5 9.500-5.500 12 0 2 4.500-1 6 2 9s3 3.500 1.500 5.500c-2 2-7 2-8-1 -1-3.500 0-5-3-7-3-1-4.500-3-4.500-6.500z" fill="#8fc98a" stroke="#444"/><path d="M6 12c3 0 5-2 8-2" stroke="#333" stroke-dasharray="2 1.300" fill="none"/></symbol>
    <symbol id="i-x" viewBox="0 0 24 24"><path d="M2 1.500L22 23M22 1.500L2 23" stroke="#aaa" stroke-width="1.800"/><circle cx="12" cy="12.200" r="2.300" fill="#eee" stroke="#888"/></symbol>
    <symbol id="i-self" viewBox="0 0 24 24"><path d="M2 22.500L22 1.800" stroke="#aaa" stroke-width="1.800" stroke-linecap="round"/><path d="M4.200 3.200l7.500 6.300 5.500-1.300L20 20.300l-5.300-7.800-8 2.500z" fill="#cfcbb0" stroke="#b5b196" stroke-width=".6"/></symbol>
    <symbol id="i-trace" viewBox="0 0 24 24"><path d="M2 22.200l6.500-3.400L4.300 7.200l16.500 8.100" fill="none" stroke="#b5b5b5" stroke-width="1.500" stroke-linecap="round"/><g fill="#eee" stroke="#999" stroke-width=".9"><circle cx="4.300" cy="7.200" r="2.200"/><circle cx="8.500" cy="18.800" r="2.200"/></g><path d="M12 3l3-1.500L21.500 12l-.7 3.300L17.500 13z" fill="#d6d2b8" stroke="#999" stroke-width=".8"/></symbol>

    <symbol id="i-brush" viewBox="0 0 24 24"><path d="M2 8l8-5 6 8-7 11-7-4z" fill="#fbe46a"/><path d="M1.500 14l8-6 4 10-5 4z" fill="#e23b2e"/><path d="M1.500 11l5-3 3 6-6 2z" fill="#89a9d8"/><path d="M9.500 10.500l7 7-6 5-6.500-8z" fill="#d9a05b" stroke="#8a5f2c" stroke-width=".7"/><path d="M13 13l9-10.500" stroke="#a3692e" stroke-width="2.600" stroke-linecap="round"/></symbol>
    <symbol id="i-group" viewBox="0 0 24 24"><path d="M1.500 12v9.500h13M4.500 8v10.500h12M7.500 5h12v10.500h-12z" fill="none" stroke="#666" stroke-width="1.200"/><path d="M11 11V3.500c0-3 4-3 4 0V14" fill="none" stroke="#3b6a9f" stroke-width="1.400"/><rect x="14.500" y="14.500" width="9" height="9" rx="2" fill="#4e8a58"/><path d="M19 16.200v5.600M16.200 19h5.600" stroke="#fff" stroke-width="1.700"/></symbol>
    <symbol id="i-eye" viewBox="0 0 24 24"><path d="M1.500 13C6 6 17 6 22.500 13 17 20 6 20 1.500 13z" fill="#fff" stroke="#777" stroke-width="1.100"/><path d="M2 8c5-5 14-5 19 0" fill="none" stroke="#888"/><circle cx="12" cy="12.500" r="4.700" fill="#7da6da" stroke="#39699f" stroke-width=".8"/><circle cx="12" cy="12.300" r="2" fill="#0d1a2b"/></symbol>
    <symbol id="i-filter" viewBox="0 0 24 24"><path d="M2 5h20l-7.500 8.500V23l-4-2.500v-7z" fill="#6a96c8" stroke="#39597d"/><rect x="1.500" y="1.500" width="21" height="4" fill="#fce94f" stroke="#a58c00" stroke-width=".8"/></symbol>
    <symbol id="i-epsf" viewBox="0 0 24 24"><g transform="translate(-.5 0)"><use href="#eps"/></g><path d="M11 12.500h12v10.500h-4v-6l-2-2.500-2 2.500v6h-4z" fill="#8c8c8c"/><path d="M12.500 12.500h9l-2 3.500h-5z" fill="#dedede" stroke="#999" stroke-width=".7"/></symbol>
    <g id="tre"><path d="M2 2.500h20M4.500 2.500V20H8M4.500 9.500H8" fill="none" stroke="#888" stroke-width="1.200"/><rect x="8" y="7.500" width="4" height="4" fill="#fce0b0" stroke="#e8901c"/><rect x="8" y="17" width="4" height="4" fill="#fce0b0" stroke="#e8901c"/></g>
    <symbol id="i-expand" viewBox="0 0 24 24"><use href="#tre"/><path d="M14.500 1.500h5V14H23l-6 8-6-8h3.500z" fill="#6a96c8" stroke="#2c5283"/></symbol>
    <symbol id="i-collapse" viewBox="0 0 24 24"><use href="#tre"/><path d="M14.500 21.500h5V9H23l-6-8.200L11 9h3.500z" fill="#6a96c8" stroke="#2c5283"/></symbol>
    <symbol id="i-remove" viewBox="0 0 24 24"><path d="M2.500 1.500h17v17h-17z" fill="#f4f4f4" stroke="#777" stroke-width="1.200"/><rect x="14.500" y="15" width="9" height="8" rx="1.500" fill="#e5484d"/><path d="M16.500 19h5" stroke="#fff" stroke-width="1.800"/></symbol>
    <symbol id="i-models" viewBox="0 0 24 24"><g stroke-width="2.600"><g stroke="#c4161c"><path d="M8 1v14M1 8h14M3 3l10 10M13 3L3 13"/></g><circle cx="8" cy="8" r="4.300" fill="#c4161c"/><circle cx="8" cy="8" r="1.700" fill="#f3d6d6"/></g><g stroke="#777" stroke-width="1.900"><path d="M19 8v10M14 13h10M15.500 9.500l7 7M22.500 9.500l-7 7"/></g><circle cx="19" cy="13" r="1.200" fill="#eee"/><g stroke="#8aaee0" stroke-width="1.700"><path d="M12 15.500v8M8 19.500h8M9.200 16.700l5.600 5.600M14.800 16.700l-5.600 5.600"/></g><circle cx="12" cy="19.500" r="1" fill="#eee"/></symbol>
    <symbol id="i-hist" viewBox="0 0 24 24"><circle cx="12" cy="12" r="10.800" fill="#f3f5f5" stroke="#777"/><path d="M12 4v8.500l5 3" fill="none" stroke="#333" stroke-width="1.100"/></symbol>
    <symbol id="i-log" viewBox="0 0 24 24"><path d="M4 1.500h11l5.500 5V23H4z" fill="#fff" stroke="#777"/><path d="M14.500 1.500v5.500h6M6 8h6M6 11.500h12M6 15h8M6 19h10" fill="none" stroke="#444" stroke-width="1.100"/></symbol>
    <symbol id="i-edin" viewBox="0 0 24 24"><rect x="1.500" y="2.500" width="14" height="12.500" fill="#fce94f" stroke="#c4a000" stroke-width="1.200"/><path d="M19 5.500l4 2.300-7.500 12-5 3.500.7-6z" fill="#f0dd60" stroke="#888" stroke-width=".9"/><path d="M11 18l2.500 3-3 2.300z" fill="#666"/></symbol>
    <symbol id="i-opts" viewBox="0 0 24 24"><path d="M8 8l7 7" stroke="#444" stroke-width="4"/><path d="M13 12.500l8.500 8" stroke="#444" stroke-width="5.200" stroke-linecap="round"/><path d="M13 12.500l8.500 8" stroke="#f3dc7c" stroke-width="3.500" stroke-linecap="round"/><path d="M3 1.500C8 0 12 4 11 8.500l2.500 3-3 2.500L7 10.500C3 10.500-.5 7 1 4l3.500 3 2.500-2.500z" fill="#f6f6f6" stroke="#444" stroke-width=".9"/><circle cx="21.500" cy="20.500" r="1.300" fill="#bbb" stroke="#444" stroke-width=".6"/></symbol>
    <symbol id="i-search" viewBox="0 0 24 24"><circle cx="9.500" cy="9" r="7.500" fill="none" stroke="#8c8c8c" stroke-width="1.800"/><path d="M15 14.500l7.500 8" stroke="#8c8c8c" stroke-width="2.600"/></symbol>
    <symbol id="i-float" viewBox="0 0 22 22"><rect x="1" y="1" width="20" height="20" rx="4" fill="none" stroke="#6a6a6a" stroke-width="1.600"/><rect x="5" y="9" width="8" height="8" rx="1" fill="none" stroke="#6a6a6a" stroke-width="1.600"/><path d="M9 6V5h8v8h-1.500" fill="none" stroke="#6a6a6a" stroke-width="1.600"/></symbol>
    <symbol id="i-close" viewBox="0 0 22 22"><rect x="1" y="1" width="20" height="20" rx="4" fill="none" stroke="#6a6a6a" stroke-width="1.600"/><path d="M6 6l10 10M16 6L6 16" stroke="#5c5c5c" stroke-width="3.600"/></symbol>
    <symbol id="i-check" viewBox="0 0 28 28"><path d="M7.500 15l4 5.500L19.500 6" fill="none" stroke="#000" stroke-width="3" stroke-linecap="round"/></symbol>
    <symbol id="i-dn" viewBox="0 0 16 10"><path d="M0 0h16L8 10z" fill="currentColor"/></symbol>
    <symbol id="i-up" viewBox="0 0 16 10"><path d="M0 10h16L8 0z" fill="currentColor"/></symbol>
    <symbol id="i-rt" viewBox="0 0 8 16"><path d="M0 0v16l8-8z" fill="currentColor"/></symbol>
    <symbol id="i-lf" viewBox="0 0 8 16"><path d="M8 0v16L0 8z" fill="currentColor"/></symbol>
    <symbol id="i-grip" viewBox="0 0 8 32"><path d="M1 0v32M7 0v32" stroke="#c2c2c2" stroke-width="2" stroke-dasharray="2 3"/></symbol>
    <symbol id="i-mouse" viewBox="0 0 32 32"><path d="M7 3c4-4 10 0 11 5l7 12c3 6-3 11-8 10-4 0-5-5-4-8C7 18 3 8 7 3z" fill="#b9a9a9" transform="translate(3 1)"/><path d="M5 2c5-3 9 1 11 6l7 12c3 6-2 11-7 10-5 0-6-5-4-9C6 16 1 8 5 2z" fill="#fff" stroke="#000" stroke-width="2.200"/><path d="M7 5l4 11M10 4l5 9M13 14l5-1" stroke="#000" stroke-width="2.800"/><circle cx="17" cy="24" r="2.200" fill="none" stroke="#000" stroke-width="1.600"/><path d="M20 7h2M24 5h2M27 2h2M1 20l4-3M2 26l5-4" stroke="#000" stroke-width="1.700"/></symbol>
    <symbol id="i-lock" viewBox="0 0 24 32"><path d="M5 16V9c0-9 14-9 14 0v7" fill="none" stroke="#8a8a8a" stroke-width="3"/><path d="M5 16V9c0-9 14-9 14 0v7" fill="none" stroke="#dcdcdc" stroke-width="1"/><rect x="0" y="14" width="24" height="17" rx="2" fill="#666"/></symbol>
    <symbol id="i-crs" viewBox="0 0 32 30"><circle cx="16" cy="17" r="12" fill="#ddd" stroke="#777" stroke-width="1.500"/><path d="M10 1h12l9 12c-4 5-26 5-30 0z" fill="#808080"/><path d="M16 1v28M10 1C5 12 8 24 13 28M22 1c5 11 2 23-3 27M5 8c7 3 15 3 22 0M4 21c8 3 16 3 24 0" fill="none" stroke="#666" stroke-width="1.400"/><path d="M13 2l-2 13M19 2l2 13M6 8c7 2 13 2 20 0" fill="none" stroke="#e8e8e8" stroke-width="1"/></symbol>
    <symbol id="i-msg" viewBox="0 0 32 32"><path d="M16 1c20 0 20 18 10 23 0 3 1 5 3 7-5 0-7-2-9-5C-5 27-5 1 16 1z" fill="#666"/></symbol>
  </defs>
</svg>

<header class="flex h-[45px] shrink-0 items-center bg-[#f3f3f3] pl-0.5 font-['Open_Sans','Noto_Sans',sans-serif]">
  <svg class="mr-1 size-8"><use href="#i-q"/></svg>
  <h1 class="flex-1 pb-0.5 text-[23px]">QGIS_M01A19 — QGIS</h1>
  <button aria-label="Minimize" class="grid h-11 w-[92px] place-items-center"><svg class="size-[22px]" viewBox="0 0 22 22"><path d="M1 10h20" stroke="#000" stroke-width="1.500"/></svg></button>
  <button aria-label="Restore" class="grid h-11 w-[92px] place-items-center pb-0.5"><svg class="size-[22px]" viewBox="0 0 22 22"><rect x="1.500" y="5.500" width="15" height="15" rx="3" fill="none" stroke="#000" stroke-width="1.600"/><path d="M5.500 2H16a4 4 0 0 1 4 4v10.500" fill="none" stroke="#000" stroke-width="1.600"/></svg></button>
  <button aria-label="Close" class="grid h-11 w-[96px] place-items-center pb-0.5"><svg class="size-[22px]" viewBox="0 0 22 22"><path d="M1.500 1.500l19 19M20.500 1.500l-19 19" stroke="#000" stroke-width="1.600"/></svg></button>
</header>

<nav aria-label="Main menu" class="flex h-[37px] shrink-0 items-center border-b-2 border-[#d6d6d6] bg-[#f0f0f0] pl-[5px]">
  <button class="px-[15px]">Pro<u>j</u>ect</button>
  <button class="px-[15px]"><u>E</u>dit</button>
  <button class="px-[15px]"><u>V</u>iew</button>
  <button class="px-[15px]"><u>L</u>ayer</button>
  <button class="px-[15px]"><u>S</u>ettings</button>
  <button class="px-[15px]"><u>P</u>lugins</button>
  <button class="px-[15px]">Vect<u>o</u>r</button>
  <button class="px-[15px]"><u>R</u>aster</button>
  <button class="px-[15px]"><u>D</u>atabase</button>
  <button class="px-[15px]"><u>W</u>eb</button>
  <button class="px-[15px]"><u>M</u>esh</button>
  <button class="px-[15px]">Pro<u>c</u>essing</button>
  <button class="px-[15px]"><u>H</u>elp</button>
</nav>

<div id="toolbars" class="shrink-0"></div>

<template id="snapping">
  <div class="mr-0.5 mt-2.5 flex h-10 w-[168px] overflow-hidden rounded-[5px] border-2 border-[#b0b0b0] bg-[#f0f0f0] text-[#6e6e6e]">
    <input aria-label="Snapping tolerance" value="5" disabled class="min-w-0 flex-1 pl-2 pt-0.5">
    <span class="flex w-7 flex-col items-center justify-center gap-1.5 border-l-2 border-[#b0b0b0] bg-[#f8f8f8] text-[#a2a2a2]">
      <button aria-label="Increase tolerance" disabled><svg class="h-2.5 w-4"><use href="#i-up"/></svg></button>
      <button aria-label="Decrease tolerance" disabled><svg class="h-2.5 w-4"><use href="#i-dn"/></svg></button>
    </span>
  </div>
  <div class="mr-0.5 mt-2 grid h-11 w-[178px] items-center rounded-[5px] border-2 border-[#c4c4c4] bg-[#f8f8f8] text-[#6e6e6e]">
    <select aria-label="Snapping unit" disabled class="col-start-1 row-start-1 h-full w-full appearance-none pl-2 pt-0.5 opacity-100"><option>px</option></select>
    <svg class="col-start-1 row-start-1 mr-3 h-2.5 w-4 justify-self-end text-[#a2a2a2]"><use href="#i-dn"/></svg>
  </div>
</template>

<main class="flex min-h-0 flex-1">
  <aside aria-label="Layers" class="flex w-[700px] flex-col">
    <div class="flex h-[46px] items-center gap-1.5 pl-2 pr-[3px]">
      <h2 class="flex-1">Layers</h2>
      <button aria-label="Float Layers panel"><svg class="size-[22px]"><use href="#i-float"/></svg></button>
      <button aria-label="Close Layers panel"><svg class="size-[22px]"><use href="#i-close"/></svg></button>
    </div>
    <div id="layerbar" class="flex h-[57px] items-center pb-1.5 pl-[7px]"></div>
    <div class="flex min-h-0 flex-1 flex-col border border-[#b8b8b8] bg-white">
      <ul class="flex-1 overflow-hidden">
        <li class="flex h-[37px] items-center whitespace-nowrap bg-[#efefef] pl-3.5">
          <svg class="mr-[18px] h-2.5 w-4 shrink-0 text-[#5c5c5c]"><use href="#i-dn"/></svg>
          <label class="flex items-center">
            <span class="mr-4 grid size-7 shrink-0"><input type="checkbox" checked class="col-start-1 row-start-1 size-7 appearance-none border-2 border-[#b8b8b8] bg-white"><svg class="pointer-events-none col-start-1 row-start-1 size-7"><use href="#i-check"/></svg></span>
            <svg class="mr-[11px] size-7 shrink-0" viewBox="0 0 28 28" fill="#fff" stroke="#8c8c8c" stroke-width="1.800"><circle cx="3" cy="22" r="2.300"/><circle cx="8" cy="9" r="2.300"/><circle cx="21" cy="3" r="2.300"/></svg>
            <span class="text-[22px] font-bold underline">R.HCMC.DisenoEstructuraEscalonadaFlujoRasanteG</span>
          </label>
        </li>
        <li><ul id="classes"></ul></li>
      </ul>
      <div class="flex h-[29px] border-t-2 border-[#c0c0c0] bg-[#e4e4e4]">
        <button aria-label="Scroll left" class="grid w-7 place-items-center border-r-2 border-[#c0c0c0] bg-[#f8f8f8] text-[#5c5c5c]"><svg class="h-4 w-2"><use href="#i-lf"/></svg></button>
        <div class="mr-8 flex-1 border-r-2 border-[#b8b8b8] bg-linear-to-b from-[#fcfcfc] to-[#f0f0f0]"></div>
        <button aria-label="Scroll right" class="grid w-7 place-items-center border-l-2 border-[#c0c0c0] bg-[#f8f8f8] text-[#5c5c5c]"><svg class="h-4 w-2"><use href="#i-rt"/></svg></button>
      </div>
    </div>
  </aside>
  <div class="grid w-3 place-items-center"><svg class="h-8 w-1" viewBox="0 0 4 32"><path d="M2 0v32" stroke="#c2c2c2" stroke-width="2" stroke-dasharray="2 3"/></svg></div>
  <section aria-label="Map canvas" class="mt-[3px] min-w-0 flex-1 border border-[#b8b8b8] bg-white">
    <svg id="map" class="size-full font-['Open_Sans','Noto_Sans',sans-serif] text-[30px]"></svg>
  </section>
  <div class="grid w-[13px] place-items-center"><svg class="h-8 w-1" viewBox="0 0 4 32"><path d="M2 0v32" stroke="#c2c2c2" stroke-width="2" stroke-dasharray="2 3"/></svg></div>
  <aside aria-label="Processing Toolbox" class="flex w-[498px] flex-col">
    <div class="flex h-[46px] items-center gap-1.5 pl-2 pr-[3px]">
      <h2 class="flex-1">Processing Toolbox</h2>
      <button aria-label="Float Processing Toolbox"><svg class="size-[22px]"><use href="#i-float"/></svg></button>
      <button aria-label="Close Processing Toolbox"><svg class="size-[22px]"><use href="#i-close"/></svg></button>
    </div>
    <div id="procbar" class="flex h-[57px] items-center pb-1.5 pl-[7px]"></div>
    <label class="flex h-[44px] items-center rounded-[5px] border-2 border-[#b0b0b0] bg-white pl-4">
      <svg class="mr-4 size-6"><use href="#i-search"/></svg>
      <input type="search" aria-label="Search algorithms" placeholder="Search..." class="min-w-0 flex-1 pt-0.5 placeholder:text-[#7c7c7c]">
    </label>
    <div class="flex min-h-0 flex-1 border border-[#b8b8b8] bg-white">
      <ul id="algs" class="flex-1 overflow-hidden pt-px"></ul>
      <div class="flex w-7 flex-col border-l-2 border-[#c0c0c0] bg-[#e4e4e4]">
        <button aria-label="Scroll up" class="grid h-7 place-items-center border-b-2 border-[#c0c0c0] bg-[#f8f8f8] text-[#5c5c5c]"><svg class="h-2.5 w-4"><use href="#i-up"/></svg></button>
        <div class="flex-[542] border-b-2 border-[#b8b8b8] bg-linear-to-r from-[#fcfcfc] to-[#f0f0f0]"></div>
        <div class="flex-[260]"></div>
        <button aria-label="Scroll down" class="grid h-7 place-items-center border-t-2 border-[#c0c0c0] bg-[#f8f8f8] text-[#5c5c5c]"><svg class="h-2.5 w-4"><use href="#i-dn"/></svg></button>
      </div>
    </div>
    <div role="tablist" class="mt-[3px] flex h-[47px] items-start">
      <button role="tab" aria-selected="false" class="h-[43px] w-[129px] rounded-b-[5px] border-2 border-[#b8b8b8] bg-[#dedede] pt-0.5">Browser</button>
      <button role="tab" aria-selected="true" class="h-[47px] w-[236px] rounded-b-[5px] border-2 border-t-0 border-[#b0b0b0] bg-[#f6f6f6] pt-1">Processing Toolbox</button>
      <span class="flex-1 border-t-2 border-[#b0b0b0]"></span>
    </div>
  </aside>
</main>

<footer class="flex h-14 shrink-0 items-center pl-2 pr-3.5 pt-[3px] text-[22px]">
  <label class="flex h-[44px] w-[400px] items-center rounded-[5px] border-2 border-[#b0b0b0] bg-white pl-4">
    <svg class="mr-4 size-6"><use href="#i-search"/></svg>
    <input type="search" aria-label="Locator" placeholder="Type to locate (Ctrl+K)" class="min-w-0 flex-1 pt-0.5 placeholder:text-[#7c7c7c]">
  </label>
  <div class="flex-1"></div>
  <label for="coord" class="mr-1.5">Coordinate</label>
  <input id="coord" value="10.47, -2.08" class="mr-2 h-[44px] w-[150px] rounded-[5px] border-2 border-[#b0b0b0] bg-white pt-0.5 text-center">
  <button aria-label="Toggle extents and mouse position display"><svg class="mr-6 size-8"><use href="#i-mouse"/></svg></button>
  <label for="scale" class="mr-1.5">Scale</label>
  <span class="mr-6 grid h-[44px] w-[162px] items-center rounded-[5px] border-2 border-[#b0b0b0] bg-white">
    <select id="scale" class="col-start-1 row-start-1 h-full w-full appearance-none pl-2 pt-0.5"><option>1:203</option></select>
    <span class="pointer-events-none col-start-1 row-start-1 grid h-full w-10 place-items-center justify-self-end rounded-r border-l-2 border-[#c4c4c4] bg-[#f8f8f8] text-[#5c5c5c]"><svg class="h-2.5 w-4"><use href="#i-dn"/></svg></span>
  </span>
  <button aria-label="Lock scale"><svg class="mr-[18px] h-8 w-6"><use href="#i-lock"/></svg></button>
  <label for="magnifier" class="mr-1.5">Magnifier</label>
  <span class="mr-[18px] flex h-10 w-[167px] overflow-hidden rounded-[5px] border-2 border-[#b0b0b0] bg-white">
    <input id="magnifier" value="100%" class="min-w-0 flex-1 pl-2 pt-0.5">
    <span class="flex w-7 flex-col items-center justify-center gap-1.5 border-l-2 border-[#b0b0b0] bg-[#f8f8f8] text-[#5c5c5c]">
      <button aria-label="Increase magnifier"><svg class="h-2.5 w-4"><use href="#i-up"/></svg></button>
      <button aria-label="Decrease magnifier"><svg class="h-2.5 w-4"><use href="#i-dn"/></svg></button>
    </span>
  </span>
  <label for="rotation" class="mr-[18px]">Rotation</label>
  <span class="mr-3 flex h-10 w-[167px] overflow-hidden rounded-[5px] border-2 border-[#b0b0b0] bg-white">
    <input id="rotation" value="0.0 °" class="min-w-0 flex-1 pl-2 pt-0.5">
    <span class="flex w-7 flex-col items-center justify-center gap-1.5 border-l-2 border-[#b0b0b0] bg-[#f8f8f8] text-[#5c5c5c]">
      <button aria-label="Increase rotation"><svg class="h-2.5 w-4"><use href="#i-up"/></svg></button>
      <button aria-label="Decrease rotation"><svg class="h-2.5 w-4"><use href="#i-dn"/></svg></button>
    </span>
  </span>
  <label class="mr-[30px] flex items-center gap-2.5">
    <span class="grid size-7"><input type="checkbox" checked class="col-start-1 row-start-1 size-7 appearance-none border-2 border-[#b8b8b8] bg-white"><svg class="pointer-events-none col-start-1 row-start-1 size-7"><use href="#i-check"/></svg></span>
    Render
  </label>
  <button class="mr-[46px] flex items-center gap-1"><svg class="h-[30px] w-8"><use href="#i-crs"/></svg>EPSG:3116</button>
  <button aria-label="Messages"><svg class="size-8"><use href="#i-msg"/></svg></button>
</footer>

<script>
  // Each entry: icon, label, flags (d disabled, p pressed, o outlined, a drop-down arrow, m corner menu arrow); "|" is a separator.
  const rows = [
    [
      ['new|New Project', 'open|Open Project', 'save|Save Project', 'layout|New Print Layout', 'layman|Layout Manager', 'style|Style Manager'],
      ['pan|Pan Map|p', 'pansel|Pan Map to Selection', 'zin|Zoom In|o', 'zout|Zoom Out', 'zfull|Zoom Full', 'zsel|Zoom to Selection', 'zlay|Zoom to Layer', 'z11|Zoom to Native Resolution|d', 'zlast|Zoom Last', 'znext|Zoom Next|d', 'mapview|New Map View', 'map3d|New 3D Map View', 'bmnew|New Spatial Bookmark', 'bm|Show Spatial Bookmarks', 'clock|Temporal Controller', 'refresh|Refresh'],
      ['select|Select Features|a', 'selexp|Select by Expression|a', 'desel|Deselect Features|a', 'selloc|Select by Location|a'],
      ['ident|Identify Features', 'abacus|Field Calculator', 'gear|Toolbox|p', 'sigma|Statistical Summary', 'table|Open Attribute Table|a', 'measure|Measure Line|a', 'tip|Show Map Tips|p', 'action|Run Feature Action|da']
    ],
    [
      ['dsm|Data Source Manager', 'gpkg|New GeoPackage Layer', 'shp|New Shapefile Layer', 'feather|New SpatiaLite Layer', 'chip|New Temporary Scratch Layer', 'mesh|New Mesh Layer', 'virt|New Virtual Layer'],
      ['pens|Current Edits|dm', 'pen|Toggle Editing|d', 'saveed|Save Layer Edits|d', 'poly|Digitize|da', 'points|Add Point Feature|d', 'vertex|Vertex Tool|da', 'attr|Modify Attributes|d', 'trash|Delete Selected|d', 'cut|Cut Features|d', 'copy|Copy Features|d', 'paste|Paste Features|d', 'undo|Undo|d', 'redo|Redo|d'],
      ['abc|Layer Labeling Options', 'pie|Layer Diagram Options', '|', 'abpinb|Highlight Pinned Labels', 'abcred|Toggle Unplaced Labels', '|', 'abpin|Pin/Unpin Labels', 'abceye|Show/Hide Labels', 'abcmove|Move Label', 'abcrot|Rotate Label', 'abced|Change Label Properties'],
      ['globe|MetaSearch'],
      ['help|Help Contents'],
      []
    ],
    [
      ['tri|Enable Advanced Digitizing Tools|d', 'move|Move Feature|da', 'rotate|Rotate Feature|d', 'scale|Scale Feature|d', 'simpl|Simplify Feature|d', 'ring|Add Ring|d', 'part|Add Part|d', 'fill|Fill Ring|d', 'dring|Delete Ring|d', 'dpart|Delete Part|d', 'resh|Reshape Features|d', 'offs|Offset Curve|d', 'rev|Reverse Line|d', 'trim|Trim/Extend Feature|d', 'split|Split Features|d', 'split|Split Parts|d', 'merge|Merge Selected Features|d', 'lines|Merge Attributes|d', 'rotsym|Rotate Point Symbols|da'],
      ['curve|Add Circular String|d', 'circ|Add Circle|da', 'ell|Add Ellipse|da', 'rect|Add Rectangle|da', 'hex|Add Regular Polygon|da'],
      ['pyc|Python Console', 'plot|Profile Tool|a', 'traced|Digitize with Curve|d']
    ],
    [
      ['magnet|Enable Snapping', 'snapv|Snapping Layers|dm', 'snapp|Snapping Type|dpm', '#', 'topo|Topological Editing', 'over|Avoid Overlap|m', 'x|Snapping on Intersection|d', 'self|Self-snapping|da', 'trace|Enable Tracing|d']
    ]
  ];
  const snapping = document.getElementById('snapping').innerHTML;

  function tool(spec) {
    if (spec === '#') return snapping;
    const [icon, label, flags = ''] = spec.split('|');
    if (!icon) return '<span class="mx-1.5 mt-2.5 h-10 w-0.5 bg-[#d8d8d8]"></span>';
    const off = flags.includes('d');
    const frame = flags.includes('p')
      ? (off ? 'border-2 border-[#c4c4c4] bg-[#dedede]' : 'border-2 border-[#aeaeae] bg-[#dcdcdc]')
      : flags.includes('o') ? 'border-2 border-[#b0b0b0] bg-[#fcfcfc]' : 'border-2 border-transparent';
    const width = flags.includes('a') ? 'w-[88px]' : 'w-16';
    const arrow = flags.includes('a') ? `<svg class="ml-[11px] h-2.5 w-4 ${off ? 'text-[#a6a6a6]' : 'text-[#505050]'}"><use href="#i-dn"/></svg>` : '';
    const corner = flags.includes('m') ? `<svg class="absolute bottom-1.5 right-0.5 h-2 w-3 ${off ? 'text-[#a6a6a6]' : 'text-[#505050]'}"><use href="#i-dn"/></svg>` : '';
    return `<button aria-label="${label}" ${off ? 'disabled' : ''} class="relative mr-0.5 flex h-[62px] shrink-0 items-center rounded-md pb-0.5 pl-1.5 ${width} ${frame}"><svg class="size-12 shrink-0 ${off ? 'opacity-35 saturate-50' : ''}"><use href="#i-${icon}"/></svg>${arrow}${corner}</button>`;
  }

  document.getElementById('toolbars').innerHTML = rows.map((row, r) =>
    '<div class="flex gap-px bg-[#fafafa]">' + row.map((bar, i) => {
      const grow = r === 1 ? (i === 3 ? 'flex-1' : '') : i === row.length - 1 ? 'flex-1' : '';
      const size = (r === 3 ? 'h-[76px]' : 'h-[78px]') + (bar.length ? '' : ' w-[34px]');
      return `<div role="toolbar" class="flex items-start border-b-2 border-[#b4b4b4] bg-linear-to-b from-[#fafafa] to-[#ededed] pl-2.5 pr-[5px] pt-[9px] ${size} ${grow}"><svg class="mr-2 mt-3.5 h-8 w-2 shrink-0"><use href="#i-grip"/></svg>${bar.map(tool).join('')}</div>`;
    }).join('') + '</div>').join('');

  // Panel tool bars use the same specs with smaller icons.
  const small = spec => {
    const [icon, label, flags = ''] = spec.split('|');
    if (!icon) return '<span class="mx-1.5 h-6 w-0.5 bg-[#cfcfcf]"></span>';
    const arrow = flags.includes('a') ? '<svg class="ml-1.5 h-2.5 w-4 text-[#505050]"><use href="#i-dn"/></svg>' : '';
    const corner = flags.includes('m') ? '<svg class="absolute bottom-0 right-0.5 h-2 w-3 text-[#505050]"><use href="#i-dn"/></svg>' : '';
    return `<button aria-label="${label}" class="relative flex h-9 shrink-0 items-center pl-[9px] ${flags.includes('a') ? 'w-[73px]' : 'w-[50px]'}"><svg class="size-8 shrink-0"><use href="#i-${icon}"/></svg>${arrow}${corner}</button>`;
  };
  document.getElementById('layerbar').innerHTML = ['brush|Open Layer Styling Panel', 'group|Add Group', 'eye|Manage Map Themes|m', 'filter|Filter Legend|m', 'epsf|Filter Legend by Expression|a', 'expand|Expand All', 'collapse|Collapse All', 'remove|Remove Layer'].map(small).join('');
  document.getElementById('procbar').innerHTML = ['models|Models|m', 'py|Scripts|m', 'hist|History', 'log|Results Viewer', '|', 'edin|Edit Features In-Place', '|', 'opts|Options'].map(small).join('');

  document.getElementById('classes').innerHTML = [['#440154', '0.14 - 0.6'], ['#3b528b', '0.6 - 1.2'], ['#21908c', '1.2 - 1.66'], ['#5cc863', '1.66 - 3.24'], ['#fde725', '3.24 - 3.7']].map(([c, t]) =>
    `<li><label class="flex h-[42px] items-center pl-[87px] text-[22px]"><span class="grid size-7"><input type="checkbox" checked class="col-start-1 row-start-1 size-7 appearance-none border-2 border-[#b8b8b8] bg-white"><svg class="pointer-events-none col-start-1 row-start-1 size-7"><use href="#i-check"/></svg></span><span class="ml-[23px] mr-[22px] size-4 rounded-full" style="background:${c}"></span>${t}</label></li>`).join('');

  document.getElementById('algs').innerHTML = ['Recently used', '3D Tiles', 'Cartography', 'Check geometry', 'Database', 'File tools', 'Fix geometry', 'GPS', 'Interpolation', 'Layer tools', 'Mesh', 'Metadata tools', 'Network analysis', 'Plots', 'Point cloud conversion', 'Point cloud data management', 'Point cloud extraction', 'Raster analysis', 'Raster creation', 'Raster terrain analysis', 'Raster tools', 'Vector analysis', 'Vector coverage', 'Vector creation'].map((t, i) =>
    `<li class="flex h-9 items-center pl-[17px]"><svg class="mr-[22px] h-4 w-2 text-[#5c5c5c]"><use href="#i-rt"/></svg><svg class="mr-3.5 size-[30px]"><use href="#${i ? 'i-q' : 'i-hist'}"/></svg>${t}</li>`).join('');

  // Map: point rows and their labels, in canvas pixels.
  const G = '#5cc863', Y = '#fde725';
  const line = [[581, G], [597, G], [613, G], [629, G], [645, G], [661, G], [678, G], [694, Y], [710, Y], [726, Y], [731, Y], [742, Y]];
  const dots = (y, under) => [[285, G], ...line, [1021, Y]].map(([x, c], i) =>
    (under ? `<circle cx="${x}" cy="${y + 1}" r="7" fill="${i < 5 ? '#440154' : i < 9 ? '#3b528b' : '#21908c'}"/>` : '') + `<circle cx="${x}" cy="${y}" r="7" fill="${c}"/>`).join('');
  const labels = [
    [293, 163, '2.76'], [513, 163, '2.76'], [594, 163, '3.09'], [750, 163, '3.69'], [659, 201, '3.69'], [1028, 163, '3.7'],
    [293, 256, '0.14'], [529, 256, '2.76'], [662, 256, '1.5'], [750, 256, '1.65'], [594, 293, '3.09'], [1028, 256, '1.66'],
    [293, 813, '2.76'], [594, 813, '3.09'], [653, 813, '0.9'], [750, 813, '1.65'], [531, 851, '0.45'], [1028, 813, '3.7'],
    [293, 907, '2.76'], [513, 907, '2.76'], [750, 907, '3.69'], [594, 943, '3.09'], [653, 943, '2.94'], [1028, 907, '3.7']
  ];
  document.getElementById('map').innerHTML = dots(169) + dots(261, true) + dots(819) + dots(912) +
    labels.map(([x, y, t]) => `<text x="${x}" y="${y}" fill="#323232" stroke="#fff" stroke-width="6" stroke-linejoin="round" paint-order="stroke">${t}</text>`).join('');
</script>
</body>
</html>
